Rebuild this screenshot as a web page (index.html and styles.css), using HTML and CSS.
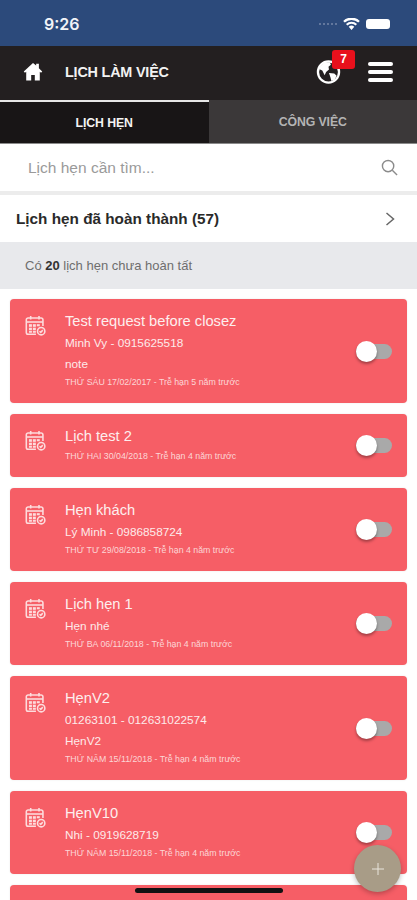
FILE: index.html
```html
<!DOCTYPE html>
<html lang="vi">
<head>
<meta charset="utf-8">
<title>Lịch làm việc</title>
<link rel="stylesheet" href="styles.css">
</head>
<body>
<svg class="defs" width="0" height="0" aria-hidden="true">
  <symbol id="cal" viewBox="0 0 24 24">
    <g fill="none" stroke="currentColor" stroke-width="1.8">
      <path d="M20.500 12.500V5.500a2 2 0 0 0-2-2H3.500a2 2 0 0 0-2 2V20a2 2 0 0 0 2 2h9"/>
      <path d="M1.500 8h19"/>
      <path d="M6.500 1v4M16 1v4"/>
      <circle cx="18.500" cy="18.500" r="4.200"/>
      <path d="M16.600 18.600l1.400 1.300 2.300-2.600"/>
    </g>
    <g fill="currentColor">
      <rect x="4.500" y="10.500" width="3.400" height="3"/><rect x="9" y="10.500" width="3.400" height="3"/><rect x="13.500" y="10.500" width="3.400" height="2.400"/>
      <rect x="4.500" y="14.500" width="3.400" height="3"/><rect x="9" y="14.500" width="3.400" height="3"/>
      <rect x="4.500" y="18.300" width="3.400" height="2"/><rect x="9" y="18.300" width="3.400" height="2"/>
    </g>
  </symbol>
</svg>
<div class="app">
  <div class="status">
    <span class="time">9:26</span>
    <div class="status-icons">
      <span class="dots"><i></i><i></i><i></i><i></i><i></i></span>
      <svg class="wifi" width="17" height="12" viewBox="0 0 18 13"><path fill="#fff" d="M9 13 6 9.600a4.300 4.300 0 0 1 6 0ZM4.600 8.100 3 6.400a8.600 8.600 0 0 1 12 0l-1.600 1.700a6.300 6.300 0 0 0-8.800 0ZM1.700 5 0 3.200a12.900 12.900 0 0 1 18 0L16.300 5a10.500 10.500 0 0 0-14.600 0Z"/></svg>
      <span class="battery"></span>
    </div>
  </div>

  <header class="topbar">
    <svg class="home" width="20" height="19" viewBox="0 0 22 21"><path fill="#fff" d="M11 1 0.800 10.600l1.300 1.400L3.500 10.800V20.500h5.500v-6h4v6h5.500V10.800l1.400 1.200 1.300-1.400L17.500 6.800V2h-3v2Z"/></svg>
    <span class="title">LỊCH LÀM VIỆC</span>
    <div class="globe-wrap">
      <svg width="25" height="24" viewBox="0 0 25 25"><circle cx="12.500" cy="12.500" r="11" fill="#231f20" stroke="#fff" stroke-width="2.400"/><path fill="#fff" d="M8 3c2-.8 4.500-1 6-.5l1 2.500-2.500 2 .5 3-3 2.500-1.500 3.500L6 11 2.500 9.500C3.500 6.500 5.500 4.500 8 3ZM13 13.500l5.500.5 2.500 2.500-2 4-3.500 1.500-1-4Z"/></svg>
      <span class="badge">7</span>
    </div>
    <div class="menu"><i></i><i></i><i></i></div>
  </header>

  <nav class="tabs">
    <div class="tab active">LỊCH HẸN</div>
    <div class="tab">CÔNG VIỆC</div>
  </nav>

  <div class="search">
    <span class="placeholder">Lịch hẹn cần tìm...</span>
    <svg width="17" height="17" viewBox="0 0 18 18" fill="none" stroke="#8b8b8b" stroke-width="1.500"><circle cx="7.500" cy="7.500" r="6"/><path d="M12 12l5 5"/></svg>
  </div>

  <div class="done-row">
    <span>Lịch hẹn đã hoàn thành (57)</span>
    <svg width="10" height="14" viewBox="0 0 10 14" fill="none" stroke="#666" stroke-width="1.500"><path d="M1.500 1 8.500 7l-7 6"/></svg>
  </div>

  <div class="count-row"><span>Có <b>20</b> lịch hẹn chưa hoàn tất</span></div>

  <main class="list">
    <article class="card">
      <svg class="cal"><use href="#cal"/></svg>
      <div class="body">
        <h3>Test request before closez</h3>
        <p>Minh Vy - 0915625518</p>
        <p>note</p>
        <small>THỨ SÁU 17/02/2017 - Trễ hạn 5 năm trước</small>
      </div>
      <span class="toggle"></span>
    </article>
    <article class="card">
      <svg class="cal"><use href="#cal"/></svg>
      <div class="body">
        <h3>Lịch test 2</h3>
        <small>THỨ HAI 30/04/2018 - Trễ hạn 4 năm trước</small>
      </div>
      <span class="toggle"></span>
    </article>
    <article class="card">
      <svg class="cal"><use href="#cal"/></svg>
      <div class="body">
        <h3>Hẹn khách</h3>
        <p>Lý Minh - 0986858724</p>
        <small>THỨ TƯ 29/08/2018 - Trễ hạn 4 năm trước</small>
      </div>
      <span class="toggle"></span>
    </article>
    <article class="card">
      <svg class="cal"><use href="#cal"/></svg>
      <div class="body">
        <h3>Lịch hẹn 1</h3>
        <p>Hẹn nhé</p>
        <small>THỨ BA 06/11/2018 - Trễ hạn 4 năm trước</small>
      </div>
      <span class="toggle"></span>
    </article>
    <article class="card">
      <svg class="cal"><use href="#cal"/></svg>
      <div class="body">
        <h3>HẹnV2</h3>
        <p>01263101 - 012631022574</p>
        <p>HẹnV2</p>
        <small>THỨ NĂM 15/11/2018 - Trễ hạn 4 năm trước</small>
      </div>
      <span class="toggle"></span>
    </article>
    <article class="card">
      <svg class="cal"><use href="#cal"/></svg>
      <div class="body">
        <h3>HẹnV10</h3>
        <p>Nhi - 0919628719</p>
        <small>THỨ NĂM 15/11/2018 - Trễ hạn 4 năm trước</small>
      </div>
      <span class="toggle"></span>
    </article>
    <article class="card card-cut"></article>
  </main>

  <button class="fab" aria-label="Thêm"><svg width="12" height="12" viewBox="0 0 12 12" stroke="#e9e5dc" stroke-width="1"><path d="M6 0v12M0 6h12"/></svg></button>
  <div class="home-indicator"></div>
</div>
</body>
</html>
```
FILE: styles.css
```css
* { box-sizing: border-box; }
html, body { margin: 0; height: 100%; }
body { font-family: "Liberation Sans", Arial, sans-serif; background: #fff; overflow: hidden; }
.defs { position: absolute; }
.app { position: relative; width: 417px; height: 900px; overflow: hidden; background: #fff; }

.status { height: 46px; background: #2c4a7b; display: flex; align-items: center; justify-content: space-between; padding: 2px 27px 0 44px; color: #fff; }
.time { font-size: 16px; font-weight: 600; font-family: "Inter", sans-serif; color: #f2f4f8; }
.status-icons { display: flex; align-items: center; gap: 6px; }
.dots { display: flex; gap: 2px; }
.dots i { width: 2px; height: 2px; border-radius: 50%; background: #7487a8; }
.battery { width: 24px; height: 10px; background: #fff; border-radius: 3px; }

.topbar { height: 54px; background: #231f20; display: flex; align-items: center; padding: 0 24px 3px 23px; color: #fff; }
.title { margin-left: 22px; font-size: 14.400px; font-weight: 700; letter-spacing: -0.2px; flex: 1; color: #f2f2f2; }
.globe-wrap { position: relative; width: 25px; height: 24px; margin-right: 27px; }
.globe-wrap svg { display: block; }
.badge { position: absolute; left: 16px; top: -10px; width: 23px; height: 19px; background: #e8101c; border-radius: 3px; font-size: 12px; font-weight: 700; text-align: center; line-height: 18px; }
.menu { width: 25px; display: flex; flex-direction: column; gap: 4px; }
.menu i { display: block; height: 4px; background: #fff; border-radius: 2px; }

.tabs { height: 44px; display: flex; border-bottom: 1px solid #8a8a8a; }
.tab { width: 50%; display: flex; align-items: center; justify-content: center; background: #3b3839; color: #b4b4b4; font-size: 12.300px; font-weight: 700; letter-spacing: -0.1px; }
.tab.active { background: #181516; color: #f4f4f4; border-top: 2px solid #e6e6e6; }

.search { height: 47px; display: flex; align-items: center; justify-content: space-between; padding: 0 19px 0 28px; }
.placeholder { color: #9a9a9a; font-size: 15.500px; }

.done-row { height: 51px; border-top: 4px solid #ececec; display: flex; align-items: center; justify-content: space-between; padding: 0 22px 0 16px; font-size: 15.300px; font-weight: 700; color: #2a2a2a; }

.count-row { height: 47px; background: #e8e9ec; display: flex; align-items: center; padding: 0 25px; font-size: 13px; color: #6e6e6e; }
.count-row b { color: #333; }

.list { padding: 10px 10px 0; display: flex; flex-direction: column; gap: 11px; }
.card { background: #f65e66; border-radius: 4px; color: #fff; padding: 13px 15px 16px; display: flex; align-items: center; box-shadow: 0 0 2px rgba(0,0,0,.1); }
.card-cut { height: 83px; }
.cal { width: 21px; height: 21px; align-self: flex-start; color: #fddcdd; margin: 3px 19px 0 0; flex: none; }
.body { flex: 1; }
.body h3 { margin: 0; font-size: 14.700px; font-weight: 400; line-height: 18px; color: #fdeeee; }
.body p { margin: 5px 0 0; font-size: 11.800px; line-height: 16px; color: #fdeaea; }
.body small { display: block; margin-top: 5px; font-size: 8.800px; line-height: 10px; color: #fcd6d6; }
.body h3 + small { margin-top: 6px; }
.toggle { position: relative; width: 36px; height: 15px; background: #a9a9a9; border-radius: 8px; margin-top: 3px; flex: none; }
.toggle::before { content: ""; position: absolute; left: 0; top: -3px; width: 21px; height: 21px; background: #fff; border-radius: 50%; box-shadow: 0 2px 3px rgba(0,0,0,.35); }

.fab { position: absolute; left: 354px; top: 845px; width: 47px; height: 47px; border: 0; padding: 0; border-radius: 50%; background: #a89c87; display: flex; align-items: center; justify-content: center; box-shadow: 0 2px 5px rgba(0,0,0,.25); }
.home-indicator { position: absolute; left: 135px; top: 888px; width: 148px; height: 5px; background: #111; border-radius: 3px; }
```
